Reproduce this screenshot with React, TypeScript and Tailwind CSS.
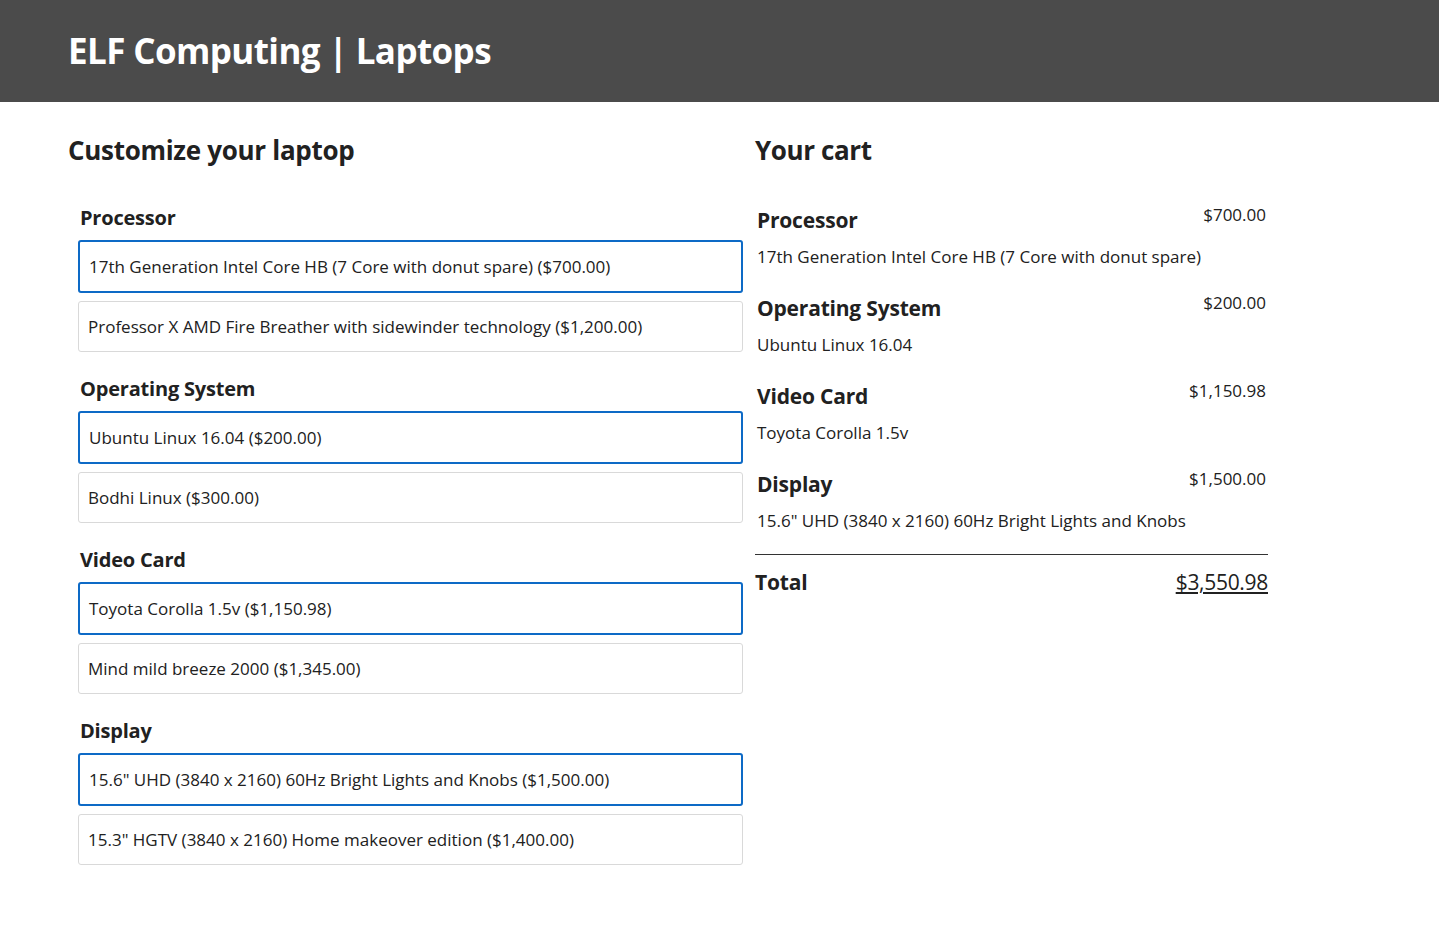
import React from 'react';

const FONT = { fontFamily: '"Open Sans", "Noto Sans", sans-serif' };

const features = [
  {
    name: 'Processor',
    options: [
      { label: '17th Generation Intel Core HB (7 Core with donut spare)', cost: 700 },
      { label: 'Professor X AMD Fire Breather with sidewinder technology', cost: 1200 },
    ],
  },
  {
    name: 'Operating System',
    options: [
      { label: 'Ubuntu Linux 16.04', cost: 200 },
      { label: 'Bodhi Linux', cost: 300 },
    ],
  },
  {
    name: 'Video Card',
    options: [
      { label: 'Toyota Corolla 1.5v', cost: 1150.98 },
      { label: 'Mind mild breeze 2000', cost: 1345 },
    ],
  },
  {
    name: 'Display',
    options: [
      { label: '15.6" UHD (3840 x 2160) 60Hz Bright Lights and Knobs', cost: 1500 },
      { label: '15.3" HGTV (3840 x 2160) Home makeover edition', cost: 1400 },
    ],
  },
];

const USCurrency = (n: number) =>
  new Intl.NumberFormat('en-US', { style: 'currency', currency: 'USD' }).format(n);

export default function App() {
  // first option of each feature is the selected one
  const selected = features.map((f) => ({ name: f.name, ...f.options[0] }));
  const total = selected.reduce((acc, s) => acc + s.cost, 0);

  return (
    <div className="min-h-screen bg-white text-[#212121]" style={FONT}>
      <header className="h-[102px] bg-[#4b4b4b] flex items-center pl-[68px]">
        <h1 className="text-[35px] font-bold text-white tracking-[-0.6px]">ELF Computing | Laptops</h1>
      </header>

      <main className="flex pl-[68px] pt-[28px]">
        {/* Options */}
        <section className="w-[675px]">
          <h2 className="text-[26px] font-bold leading-[40px] tracking-[-0.3px]">Customize your laptop</h2>
          <div className="pt-[34px] pl-[10px]">
            {features.map((f) => (
              <fieldset key={f.name} className="mb-[23px]">
                <h3 className="text-[20px] font-bold leading-[28px] mb-[8px] pl-[2px] tracking-[-0.2px]">{f.name}</h3>
                <div className="flex flex-col gap-[8px]">
                  {f.options.map((o, i) => (
                    <div
                      key={o.label}
                      className={`w-[665px] rounded-[3px] flex items-center text-[17px] ${
                        i === 0
                          ? 'h-[53px] border-2 border-[#0d6ac6] pl-[9px]'
                          : 'h-[51px] border border-[#d9d9d9] pl-[9px]'
                      }`}
                    >
                      {o.label} ({USCurrency(o.cost)})
                    </div>
                  ))}
                </div>
              </fieldset>
            ))}
          </div>
        </section>

        {/* Cart */}
        <section className="w-[513px] ml-[12px]">
          <h2 className="text-[26px] font-bold leading-[40px] tracking-[-0.4px]">Your cart</h2>
          <div className="pt-[31px] pl-[2px]">
            {selected.map((s) => (
              <div key={s.name} className="h-[88px]">
                <div className="flex justify-between items-start">
                  <div className="text-[21px] font-bold leading-[30px] pt-[4px] tracking-[-0.2px]">{s.name}</div>
                  <div className="text-[17px] leading-[22px] pt-[3px] pr-[2px]">{USCurrency(s.cost)}</div>
                </div>
                <div className="text-[17px] leading-[26px] mt-[9px]">{s.label}</div>
              </div>
            ))}
          </div>
          <div className="border-t border-[#333] mt-[1px] pt-[12px] flex justify-between items-center">
            <div className="text-[21px] font-bold tracking-[-0.2px]">Total</div>
            <div className="text-[21px] underline tracking-[-0.3px]">{USCurrency(total)}</div>
          </div>
        </section>
      </main>
    </div>
  );
}
